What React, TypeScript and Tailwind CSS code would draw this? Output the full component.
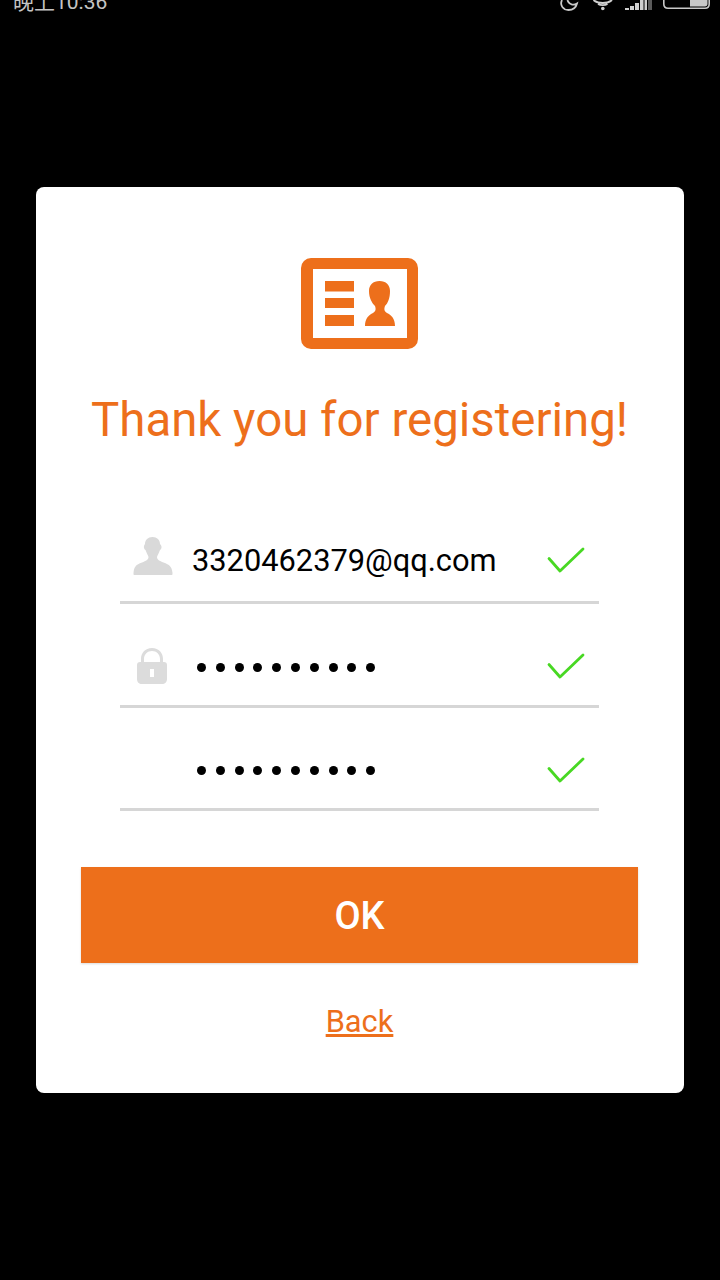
import type { FC } from 'react';

const CheckIcon: FC = () => (
  <svg width="40" height="30" viewBox="0 0 40 30" fill="none" className="shrink-0">
    <path d="M2 11.5 L13 24 L36 2" stroke="#48d823" strokeWidth="2.8" strokeLinecap="round" strokeLinejoin="round" />
  </svg>
);

const CardIcon: FC = () => (
  <svg width="117" height="91" viewBox="0 0 117 91" className="block">
    <path
      fillRule="evenodd"
      fill="#ed6f1b"
      d="M10 0H107A10 10 0 0 1 117 10V81A10 10 0 0 1 107 91H10A10 10 0 0 1 0 81V10A10 10 0 0 1 10 0ZM12 11V80H106V11Z"
    />
    <rect x="24" y="23" width="29" height="10.500" fill="#ed6f1b" />
    <rect x="24" y="40" width="29" height="10" fill="#ed6f1b" />
    <rect x="24" y="57" width="29" height="11" fill="#ed6f1b" />
    <path
      fill="#ed6f1b"
      d="M78.500 23C72 23 68 27 68 33C68 40 71 45 74 48C75 51 75 53 72 55C68 57 64 60 64 68H94C94 60 90 57 86 55C83 53 83 51 84 48C87 45 89 40 89 33C89 27 85 23 78.500 23Z"
    />
  </svg>
);

const UserIcon: FC = () => (
  <svg width="40" height="38" viewBox="0 0 40 38" className="block">
    <path
      fill="#d9d9d9"
      d="M19.500 0C15 0 12 3 12 7C10.500 8.500 10.500 12 12.500 13C13.500 16 15 18 15.500 20C15.500 22.500 13 24 9 25.500C3 27.500 1 30 0.500 36C0.500 37 0.500 38 1 38H39C39.500 38 39.500 37 39.500 36C39 30 36.500 27.500 30.500 25.500C26.500 24 24 22.500 24 20C24.500 18 26 16 27 13C29 12 29 8.500 27 7C27 3 24 0 19.500 0Z"
    />
  </svg>
);

const LockIcon: FC = () => (
  <svg width="30" height="36" viewBox="0 0 30 36" className="block">
    <path
      fillRule="evenodd"
      fill="#dcdcdc"
      d="M15 0C8 0 4 5 4 11V14H3C1 14 0 15 0 17V31C0 34 2 36 5 36H25C28 36 30 34 30 31V17C30 15 29 14 27 14H26V11C26 5 22 0 15 0ZM15 3C19.500 3 23 6.500 23 11V14H7V11C7 6.500 10.500 3 15 3ZM13 21H17V29H13Z"
    />
  </svg>
);

const Dots: FC = () => (
  <div className="-mt-[2px] flex gap-[9.8px] pl-[5px]">
    {Array.from({ length: 10 }).map((_, i) => (
      <span key={i} className="h-[9px] w-[9px] rounded-full bg-black" />
    ))}
  </div>
);

const StatusBar: FC = () => (
  <div className="flex h-[12px] items-end justify-between overflow-hidden pl-[13px] pr-[10px]">
    <span className="-mb-[4px] font-['Roboto','Noto_Sans_CJK_SC',sans-serif] text-[21px] leading-[28px] text-[#c4c4c4]">
      晚上10:36
    </span>
    <svg width="158" height="12" viewBox="0 0 158 12" fill="none" className="block">
      {/* moon */}
      <path d="M10 0C7.500 5 11 10 16.500 10C20.500 10 24 7.500 25 3.500C22 5.500 18 5 16 1.500L15.500 0" stroke="#c8c8c8" strokeWidth="1.800" />
      {/* wifi */}
      <path d="M41.500 0C46 4 55.500 4 60 0M46 4C48.500 5.500 53 5.500 55.500 4" stroke="#d0d0d0" strokeWidth="1.800" />
      <circle cx="50.800" cy="8.500" r="1.800" fill="#d0d0d0" />
      {/* signal */}
      <rect x="73" y="8" width="4" height="2" fill="#cfcfcf" />
      <rect x="78" y="6" width="4" height="4" fill="#cfcfcf" />
      <rect x="83" y="3" width="4" height="7" fill="#cfcfcf" />
      <rect x="88" y="0" width="3.500" height="10" fill="#cfcfcf" />
      <rect x="92.500" y="0" width="2.500" height="10" fill="#cfcfcf" />
      <rect x="96" y="0" width="4" height="10" fill="#5a5a5a" />
      {/* battery */}
      <path d="M111.800 0V4C111.800 7 113.500 8.200 116 8.200H153C155.500 8.200 157.200 7 157.200 4V0" stroke="#c8c8c8" strokeWidth="1.600" />
      <path d="M138 0H155.500V4C155.500 5.500 154.500 6.500 153 6.500H138Z" fill="#c8c8c8" />
    </svg>
  </div>
);

export default function App() {
  return (
    <div className="flex h-[1280px] w-[720px] flex-col overflow-hidden bg-black font-['Roboto',sans-serif]">
      <StatusBar />
      <main className="mx-[36px] mt-[175px] flex h-[906px] flex-col items-center rounded-[8px] bg-white pr-[1px] pt-[71px]">
        <CardIcon />
        <h1 className="mt-[41px] text-[47.4px] leading-[60px] whitespace-nowrap text-[#ed6f1b]">
          Thank you for registering!
        </h1>

        <div className="mt-[60px] w-[479px]">
          <div className="flex h-[94px] items-center border-b-[3px] border-[#d6d6d6] pl-[13px] pr-[12px] pt-[12px]">
            <div className="-mt-[12px] w-[59px] shrink-0">
              <UserIcon />
            </div>
            <span className="-mt-[2px] flex-1 text-[30.8px] leading-[36px] text-black">3320462379@qq.com</span>
            <CheckIcon />
          </div>
          <div className="flex h-[104px] items-center border-b-[3px] border-[#d6d6d6] pl-[17px] pr-[12px] pt-[27px]">
            <div className="mb-[4px] w-[55px] shrink-0">
              <LockIcon />
            </div>
            <div className="flex-1">
              <Dots />
            </div>
            <CheckIcon />
          </div>
          <div className="flex h-[103px] items-center border-b-[3px] border-[#d6d6d6] pl-[72px] pr-[12px] pt-[27px]">
            <div className="flex-1">
              <Dots />
            </div>
            <CheckIcon />
          </div>
        </div>

        <button className="mt-[56px] flex h-[96px] w-[557px] items-center justify-center bg-[#ed6f1b] pt-[3px] text-[38px] font-medium text-white shadow-[0_1px_2px_rgba(0,0,0,0.15)]">
          OK
        </button>

        <a href="#" className="mt-[39px] text-[30.8px] leading-[40px] text-[#ed6f1b] underline">
          Back
        </a>
      </main>
    </div>
  );
}
